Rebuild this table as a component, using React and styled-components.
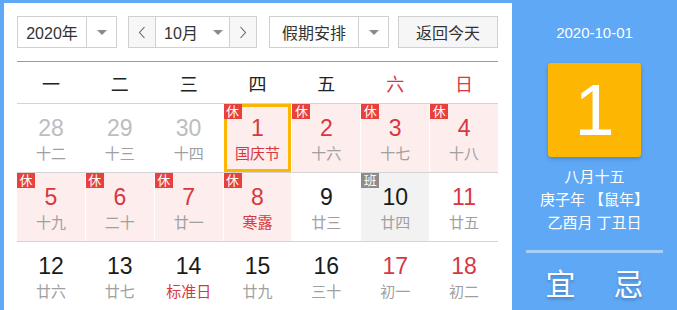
import React from "react"
import styled, { createGlobalStyle } from "styled-components"

const BLUE = "#5fa8f6"
const RED = "#d7373f"

const GlobalStyle = createGlobalStyle`
  body {
    margin: 0;
    font-family: "Liberation Sans", "Noto Sans CJK SC", sans-serif;
    background: #fff;
  }
`

const Frame = styled.div`
  display: flex;
  height: 310px;
  box-sizing: border-box;
  border-top: 3px solid ${BLUE};
  border-left: 4px solid ${BLUE};
  overflow: hidden;
`

const Main = styled.div`
  width: 508px;
  box-sizing: border-box;
  padding: 13px 14px 0 13px;
  background: #fff;
`

const Toolbar = styled.div`
  display: flex;
  align-items: center;
  height: 32px;
`

const Select = styled.div`
  display: flex;
  height: 32px;
  box-sizing: border-box;
  border: 1px solid #d0d0d0;
  background: #fff;
  margin-right: ${p => p.$gap || 0}px;
  color: #333;
  font-size: 16px;
`

const SelectLabel = styled.div`
  width: ${p => p.$w}px;
  display: flex;
  align-items: center;
  justify-content: center;
`

const SelectArrow = styled.div`
  width: ${p => p.$w || 29}px;
  display: flex;
  align-items: center;
  justify-content: center;
  border-left: ${p => (p.$split ? "1px solid #d0d0d0" : "none")};
  &::after {
    content: "";
    border-left: 5px solid transparent;
    border-right: 5px solid transparent;
    border-top: 5px solid #8a8a8a;
  }
`

const StepButton = styled.div`
  width: 26px;
  display: flex;
  align-items: center;
  justify-content: center;
  background: #f7f7f7;
  border-${p => p.$side}: 1px solid #d0d0d0;
`

const TodayButton = styled.div`
  width: 102px;
  height: 32px;
  box-sizing: border-box;
  border: 1px solid #d0d0d0;
  background: #f6f6f6;
  display: flex;
  align-items: center;
  justify-content: center;
  font-size: 16px;
  color: #333;
`

const Rule = styled.div`
  height: 1px;
  background: ${BLUE};
  margin-top: 13px;
`

const Weekdays = styled.div`
  display: grid;
  grid-template-columns: repeat(7, 1fr);
  column-gap: 1px;
  height: 41px;
  border-bottom: 1px solid #d4d4d4;
`

const Weekday = styled.div`
  display: flex;
  align-items: center;
  justify-content: center;
  font-size: 18px;
  color: ${p => (p.$weekend ? RED : "#222")};
`

const Week = styled.div`
  display: grid;
  grid-template-columns: repeat(7, 1fr);
  column-gap: 1px;
  height: 68px;
  border-bottom: 1px solid #d4d4d4;
`

const cellBg = { off: "#fdeded", work: "#f2f2f2" }

const Cell = styled.div`
  position: relative;
  display: flex;
  flex-direction: column;
  align-items: center;
  padding-top: 10px;
  box-sizing: border-box;
  background: ${p => cellBg[p.$kind] || "#fff"};
  box-shadow: ${p => (p.$today ? "inset 0 0 0 3px #fdb602" : "none")};
`

const Badge = styled.span`
  position: absolute;
  top: 0;
  left: 0;
  width: 18px;
  height: 15px;
  line-height: 15px;
  text-align: center;
  font-size: 13px;
  color: #fff;
  background: ${p => (p.$work ? "#8c8c8c" : "#e8403c")};
`

const Num = styled.div`
  font-size: 23px;
  line-height: 28px;
  color: ${p => p.$color};
`

const Lunar = styled.div`
  margin-top: 2px;
  font-size: 15px;
  line-height: 19px;
  color: ${p => (p.$red ? RED : "#a0a0a0")};
`

const Side = styled.div`
  flex: 1;
  background: ${BLUE};
  display: flex;
  flex-direction: column;
  align-items: center;
  color: #fff;
  padding-top: 21px;
`

const DateText = styled.div`
  font-size: 15px;
  line-height: 18px;
`

const DayBox = styled.div`
  margin-top: 21px;
  width: 93px;
  height: 94px;
  border-radius: 3px;
  background: #fdb702;
  box-shadow: 0 2px 4px rgba(0, 0, 0, 0.2);
  display: flex;
  align-items: center;
  justify-content: center;
  font-size: 72px;
  color: #fff;
`

const LunarInfo = styled.div`
  margin-top: 8px;
  font-size: 15px;
  line-height: 23px;
  text-align: center;
  white-space: pre;
`

const Divider = styled.div`
  margin-top: 16px;
  width: 137px;
  height: 3px;
  background: #a7cffa;
`

const Advice = styled.div`
  margin-top: 14px;
  display: flex;
  gap: 38px;
  font-size: 30px;
  line-height: 36px;
  text-shadow: 0 2px 3px rgba(0, 0, 0, 0.25);
`

const Chevron = ({ dir }) => (
  <svg width="8" height="13" viewBox="0 0 8 13">
    <path
      d={dir === "left" ? "M6.5 1 L1.5 6.5 L6.5 12" : "M1.5 1 L6.5 6.5 L1.5 12"}
      fill="none"
      stroke="#666"
      strokeWidth="1.1"
    />
  </svg>
)

const weekdays = ["一", "二", "三", "四", "五", "六", "日"]

// kind: off (休), work (班); muted: other month; lr: red lunar text
const weeks = [
  [
    { d: 28, l: "十二", muted: true },
    { d: 29, l: "十三", muted: true },
    { d: 30, l: "十四", muted: true },
    { d: 1, l: "国庆节", kind: "off", lr: true, today: true },
    { d: 2, l: "十六", kind: "off" },
    { d: 3, l: "十七", kind: "off" },
    { d: 4, l: "十八", kind: "off" },
  ],
  [
    { d: 5, l: "十九", kind: "off" },
    { d: 6, l: "二十", kind: "off" },
    { d: 7, l: "廿一", kind: "off" },
    { d: 8, l: "寒露", kind: "off", lr: true },
    { d: 9, l: "廿三" },
    { d: 10, l: "廿四", kind: "work" },
    { d: 11, l: "廿五" },
  ],
  [
    { d: 12, l: "廿六" },
    { d: 13, l: "廿七" },
    { d: 14, l: "标准日", lr: true },
    { d: 15, l: "廿九" },
    { d: 16, l: "三十" },
    { d: 17, l: "初一" },
    { d: 18, l: "初二" },
  ],
]

function numColor(day, col) {
  if (day.muted) return "#bdbdbd"
  if (day.kind === "work") return "#1a1a1a"
  if (day.kind === "off" || col >= 5) return RED
  return "#1a1a1a"
}

export default function App() {
  return (
    <>
      <GlobalStyle />
      <Frame>
        <Main>
          <Toolbar>
            <Select $gap={11}>
              <SelectLabel $w={68}>2020年</SelectLabel>
              <SelectArrow $split />
            </Select>
            <Select $gap={12}>
              <StepButton $side="right">
                <Chevron dir="left" />
              </StepButton>
              <SelectLabel $w={50}>10月</SelectLabel>
              <SelectArrow $w={23} />
              <StepButton $side="left">
                <Chevron dir="right" />
              </StepButton>
            </Select>
            <Select $gap={9}>
              <SelectLabel $w={88}>假期安排</SelectLabel>
              <SelectArrow $split />
            </Select>
            <TodayButton>返回今天</TodayButton>
          </Toolbar>
          <Rule />
          <Weekdays>
            {weekdays.map((w, i) => (
              <Weekday key={w} $weekend={i >= 5}>
                {w}
              </Weekday>
            ))}
          </Weekdays>
          {weeks.map((week, r) => (
            <Week key={r}>
              {week.map((day, c) => (
                <Cell key={c} $kind={day.kind} $today={day.today}>
                  {day.kind === "off" && <Badge>休</Badge>}
                  {day.kind === "work" && <Badge $work>班</Badge>}
                  <Num $color={numColor(day, c)}>{day.d}</Num>
                  <Lunar $red={day.lr}>{day.l}</Lunar>
                </Cell>
              ))}
            </Week>
          ))}
        </Main>
        <Side>
          <DateText>2020-10-01</DateText>
          <DayBox>1</DayBox>
          <LunarInfo>{"八月十五\n庚子年 【鼠年】\n乙酉月 丁丑日"}</LunarInfo>
          <Divider />
          <Advice>
            <span>宜</span>
            <span>忌</span>
          </Advice>
        </Side>
      </Frame>
    </>
  )
}
